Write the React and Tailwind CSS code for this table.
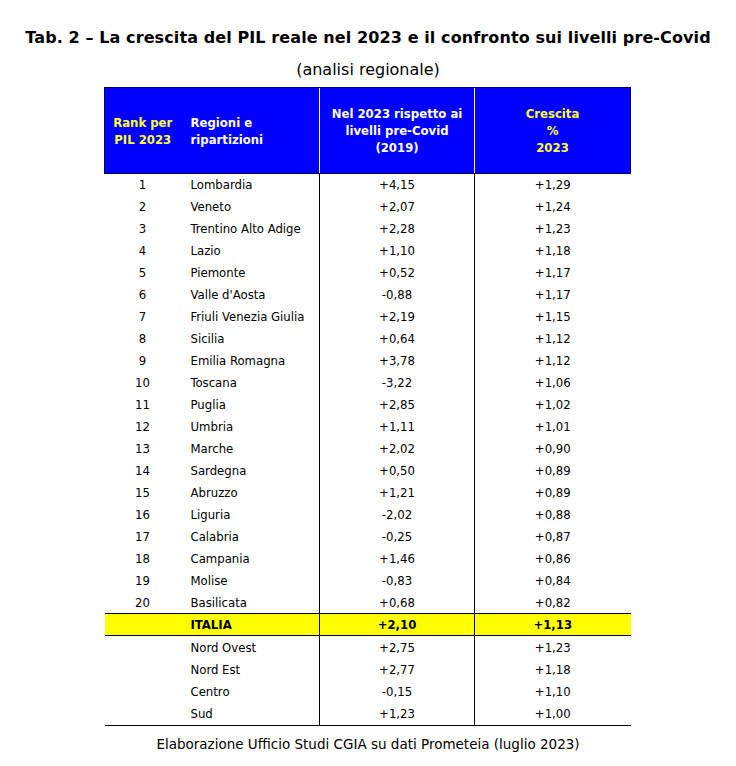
const rows = [
  [1, "Lombardia", "+4,15", "+1,29"],
  [2, "Veneto", "+2,07", "+1,24"],
  [3, "Trentino Alto Adige", "+2,28", "+1,23"],
  [4, "Lazio", "+1,10", "+1,18"],
  [5, "Piemonte", "+0,52", "+1,17"],
  [6, "Valle d'Aosta", "-0,88", "+1,17"],
  [7, "Friuli Venezia Giulia", "+2,19", "+1,15"],
  [8, "Sicilia", "+0,64", "+1,12"],
  [9, "Emilia Romagna", "+3,78", "+1,12"],
  [10, "Toscana", "-3,22", "+1,06"],
  [11, "Puglia", "+2,85", "+1,02"],
  [12, "Umbria", "+1,11", "+1,01"],
  [13, "Marche", "+2,02", "+0,90"],
  [14, "Sardegna", "+0,50", "+0,89"],
  [15, "Abruzzo", "+1,21", "+0,89"],
  [16, "Liguria", "-2,02", "+0,88"],
  [17, "Calabria", "-0,25", "+0,87"],
  [18, "Campania", "+1,46", "+0,86"],
  [19, "Molise", "-0,83", "+0,84"],
  [20, "Basilicata", "+0,68", "+0,82"],
];

const areas = [
  ["Nord Ovest", "+2,75", "+1,23"],
  ["Nord Est", "+2,77", "+1,18"],
  ["Centro", "-0,15", "+1,10"],
  ["Sud", "+1,23", "+1,00"],
];

// the table body is narrower than the headings, hence two stacks
const condensed = "font-['DejaVu_Sans_Condensed','DejaVu_Sans',sans-serif]";
const wide = "font-['DejaVu_Sans','Verdana',sans-serif]";

export default function App() {
  return (
    <div className="w-[736px] h-[766px] bg-white text-black">
      <h1 className={`${wide} pt-[27px] text-center text-[16px] leading-[22px] font-bold tracking-[0.1px]`}>
        Tab. 2 – La crescita del PIL reale nel 2023 e il confronto sui livelli pre-Covid
      </h1>
      <p className={`${wide} mt-[11px] text-center text-[16px] leading-[20px]`}>(analisi regionale)</p>

      <table className={`${condensed} ml-[104px] mt-[7px] w-[526px] table-fixed border-collapse text-[13px]`}>
        <colgroup>
          <col className="w-[76px]" />
          <col className="w-[139px]" />
          <col className="w-[155px]" />
          <col className="w-[156px]" />
        </colgroup>
        <thead>
          <tr className="h-[86px] bg-[#0000ff] font-bold leading-[17px]">
            <th className="border-y border-l border-[#000066] text-center text-[#ffff33]">
              Rank per
              <br />
              PIL 2023
            </th>
            <th className="border-y border-[#000066] pl-[10px] text-left text-white">
              Regioni e
              <br />
              ripartizioni
            </th>
            <th className="border-y border-l border-[#000066] border-l-white text-center text-white">
              Nel 2023 rispetto ai
              <br />
              livelli pre-Covid
              <br />
              (2019)
            </th>
            <th className="border-y border-x border-[#000066] border-l-white text-center text-[#ffff33]">
              Crescita
              <br />%
              <br />
              2023
            </th>
          </tr>
        </thead>
        <tbody className="leading-[21px]">
          {rows.map(([rank, name, pre, grow]) => (
            <tr key={rank} className="h-[22px]">
              <td className="text-center">{rank}</td>
              <td className="pl-[10px] whitespace-nowrap">{name}</td>
              <td className="border-l border-black text-center">{pre}</td>
              <td className="border-l border-black text-center">{grow}</td>
            </tr>
          ))}
          <tr className="h-[21px] bg-[#ffff00] font-bold border-y border-black">
            <td></td>
            <td className="pl-[10px]">ITALIA</td>
            <td className="border-l border-black text-center">+2,10</td>
            <td className="border-l border-black text-center">+1,13</td>
          </tr>
          {areas.map(([name, pre, grow], i) => (
            <tr
              key={name}
              className={i === 0 ? "h-[23px]" : i === areas.length - 1 ? "h-[23px] border-b border-black" : "h-[22px]"}
            >
              <td></td>
              <td className="pl-[10px]">{name}</td>
              <td className="border-l border-black text-center">{pre}</td>
              <td className="border-l border-black text-center">{grow}</td>
            </tr>
          ))}
        </tbody>
      </table>

      <p className={`${wide} mt-[9px] text-center text-[13.5px] leading-[18px]`}>
        Elaborazione Ufficio Studi CGIA su dati Prometeia (luglio 2023)
      </p>
    </div>
  );
}
